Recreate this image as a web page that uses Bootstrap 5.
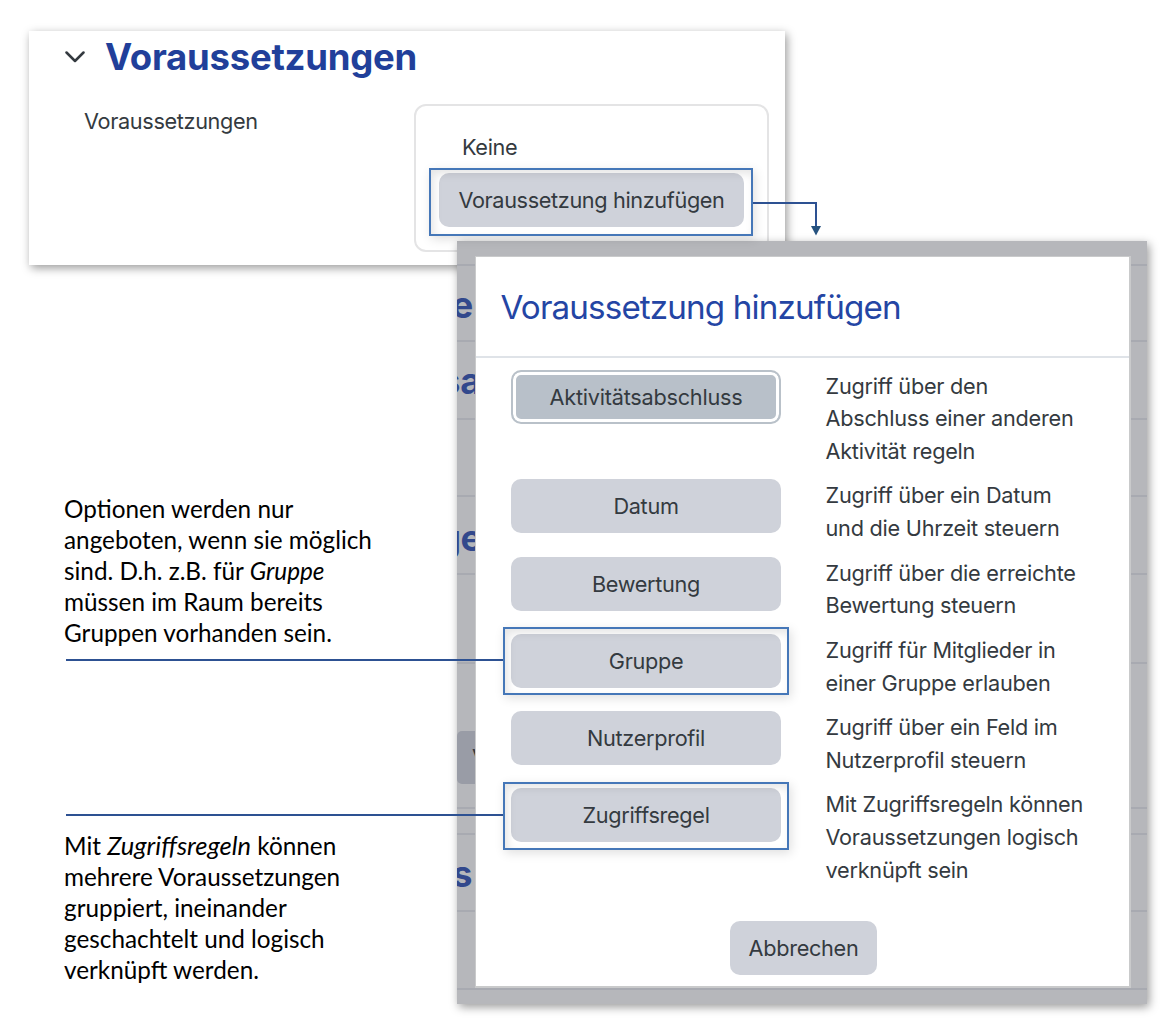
<!DOCTYPE html>
<html lang="de">
<head>
<meta charset="utf-8">
<meta name="viewport" content="width=device-width, initial-scale=1">
<title>Voraussetzungen</title>
<link rel="stylesheet" href="https://cdn.jsdelivr.net/npm/bootstrap@5.3.0/dist/css/bootstrap.min.css">
<style>
body{background:#fff;color:#343a40;font-family:Inter,"Liberation Sans",sans-serif;font-size:21.7px;line-height:32.7px;letter-spacing:-.35px}
.canvas{width:1176px;height:1032px}
.shot{box-shadow:2px 3px 9px rgba(0,0,0,.4)}
.shot-a{left:29px;top:30.5px;width:756px;height:234.5px;background:#fff}
.shot-b{left:457px;top:241px;width:690px;height:763px;background:#b6b7bb}

/* prerequisites section */
.sec-head{padding:4.5px 0 0 36px}
.sec-title{color:#213f9a;font-weight:700;font-size:36.5px;line-height:44px;letter-spacing:-.23px;margin-left:20px}
.sec-label{width:385px;padding:26px 0 0 55px}
.rbox{border:2px solid #e4e4e5;border-radius:12px;width:355px;height:148px;margin-top:25px;padding:25px 0 0 23px}
.none-text{padding-left:23px;margin-bottom:9.5px}
.btn-soft{--bs-btn-bg:#cfd2da;--bs-btn-color:#343a40;--bs-btn-border-width:0;--bs-btn-border-radius:10px;--bs-btn-padding-x:0;--bs-btn-padding-y:0;--bs-btn-font-size:21.7px;--bs-btn-line-height:54px;--bs-btn-hover-bg:#b9c1c9;height:54px;letter-spacing:-.32px}
.btn-add{width:305px;letter-spacing:-.37px}
.btn-focus{background:#b8c0c9;border:2px solid #b9c1c9;box-shadow:inset 0 0 0 3px #fff;line-height:48px;letter-spacing:-.24px}

/* page behind the dialog */
.rule{left:0;right:0;height:2px;background:#a8aab1}
.ghost{left:0;width:18px;height:50px;overflow:hidden;direction:rtl;white-space:nowrap;color:#32488c;font-weight:700;font-size:36.5px;line-height:50px}
.ghost-btn{left:0;top:490px;width:18px;height:53px;background:#999ca6;border-radius:5px 0 0 5px;overflow:hidden;padding-left:15px;line-height:53px}

/* dialog */
.dlg{left:18px;top:15px;width:656px;height:732px;background:#fff;border:solid #c9cacb;border-width:1px 2px 2px 1px}
.dlg-head{height:101px;border-bottom:2px solid #dfe3e8;padding:28px 25px 0 24.5px}
.dlg-title{color:#2445a4;font-size:33.2px;line-height:44px;letter-spacing:-.86px;font-weight:400}
.opts{padding:11.5px 0 0 35px}
.opt{margin-bottom:11.8px}
.opt .btn{width:270px;flex:none}
.opt-text{margin-left:44.5px;letter-spacing:-.25px;position:relative}
.btn-cancel{width:147px;margin:23px 0 0 2px}

/* annotations */
.hl{border:2px solid #4577b8;box-shadow:2px 3px 10px rgba(0,0,0,.13),inset 3px 4px 9px rgba(0,0,0,.1);pointer-events:none}
.hl-a{left:429px;top:168px;width:324px;height:68px}
.hl-b{left:503px;top:627px;width:286px;height:68px}
.hl-c{left:503px;top:782px;width:286px;height:68px}
.wires{left:0;top:0;pointer-events:none}
.note-col{padding:493px 0 0 64px;width:440px;color:#000;font-family:Lato,"Noto Sans",sans-serif;font-size:24.3px;line-height:31px;letter-spacing:0}
.note-col p{margin-bottom:182px}
.wide-term{font-size:25.5px;line-height:1}
</style>
</head>
<body>
<main class="canvas position-relative overflow-hidden">
  <section class="shot shot-a position-absolute">
    <div class="sec-head d-flex align-items-center">
      <svg width="20" height="12" viewBox="0 0 20 12" fill="none" stroke="#343a40" stroke-width="2.5" stroke-linecap="round" stroke-linejoin="round"><path d="M1.5 1.5 10 10 18.5 1.5"/></svg>
      <h2 class="sec-title mb-0">Voraussetzungen</h2>
    </div>
    <div class="d-flex">
      <div class="sec-label">Voraussetzungen</div>
      <div class="rbox">
        <div class="none-text">Keine</div>
        <button class="btn btn-soft btn-add" type="button">Voraussetzung hinzufügen</button>
      </div>
    </div>
  </section>

  <div class="note-col">
    <p>Optionen werden nur<br>angeboten, wenn sie möglich<br>sind. D.h. z.B. für <i>Gruppe</i><br>müssen im Raum bereits<br>Gruppen vorhanden sein.</p>
    <p class="mb-0">Mit <i class="wide-term">Zugriffsregeln</i> können<br>mehrere Voraussetzungen<br>gruppiert, ineinander<br>geschachtelt und logisch<br>verknüpft werden.</p>
  </div>

  <section class="shot shot-b position-absolute">
    <div class="rule position-absolute" style="top:23px"></div>
    <div class="rule position-absolute" style="top:99px"></div>
    <div class="rule position-absolute" style="top:177px"></div>
    <div class="rule position-absolute" style="top:254px"></div>
    <div class="rule position-absolute" style="top:332px"></div>
    <div class="rule position-absolute" style="top:421px"></div>
    <div class="rule position-absolute" style="top:566px"></div>
    <div class="rule position-absolute" style="top:592px"></div>
    <div class="rule position-absolute" style="top:669px"></div>
    <div class="rule position-absolute" style="top:747px"></div>
    <div class="ghost position-absolute" style="top:39px;width:16px">e</div>
    <div class="ghost position-absolute" style="top:115px;width:24px">sa</div>
    <div class="ghost position-absolute" style="top:272px;width:25px">ge</div>
    <div class="ghost position-absolute" style="top:608px;width:15px">s</div>
    <div class="ghost-btn position-absolute">V</div>

    <div class="dlg position-absolute">
      <div class="dlg-head"><h3 class="dlg-title mb-0">Voraussetzung hinzufügen</h3></div>
      <div class="opts">
        <div class="opt d-flex"><button class="btn btn-soft btn-focus" type="button">Aktivitätsabschluss</button><div class="opt-text">Zugriff über den<br>Abschluss einer anderen<br>Aktivität regeln</div></div>
        <div class="opt d-flex"><button class="btn btn-soft" type="button">Datum</button><div class="opt-text">Zugriff über ein Datum<br>und die Uhrzeit steuern</div></div>
        <div class="opt d-flex"><button class="btn btn-soft" type="button">Bewertung</button><div class="opt-text">Zugriff über die erreichte<br>Bewertung steuern</div></div>
        <div class="opt d-flex"><button class="btn btn-soft" type="button">Gruppe</button><div class="opt-text">Zugriff für Mitglieder in<br>einer Gruppe erlauben</div></div>
        <div class="opt d-flex"><button class="btn btn-soft" type="button">Nutzerprofil</button><div class="opt-text">Zugriff über ein Feld im<br>Nutzerprofil steuern</div></div>
        <div class="opt d-flex"><button class="btn btn-soft" type="button">Zugriffsregel</button><div class="opt-text">Mit Zugriffsregeln können<br>Voraussetzungen logisch<br>verknüpft sein</div></div>
      </div>
      <div class="d-flex justify-content-center"><button class="btn btn-soft btn-cancel" type="button">Abbrechen</button></div>
    </div>
  </section>

  <div class="hl hl-a position-absolute"></div>
  <div class="hl hl-b position-absolute"></div>
  <div class="hl hl-c position-absolute"></div>
  <svg class="wires position-absolute" width="1176" height="1032" fill="none" stroke="#2d5192" stroke-width="2">
    <path d="M753 203H817M816 203V228M66 660H503M66 815H503"/>
    <path d="M811 226H821L816 235.5Z" fill="#26527f" stroke="none"/>
  </svg>
</main>
<script src="https://cdn.jsdelivr.net/npm/bootstrap@5.3.0/dist/js/bootstrap.bundle.min.js"></script>
</body>
</html>
